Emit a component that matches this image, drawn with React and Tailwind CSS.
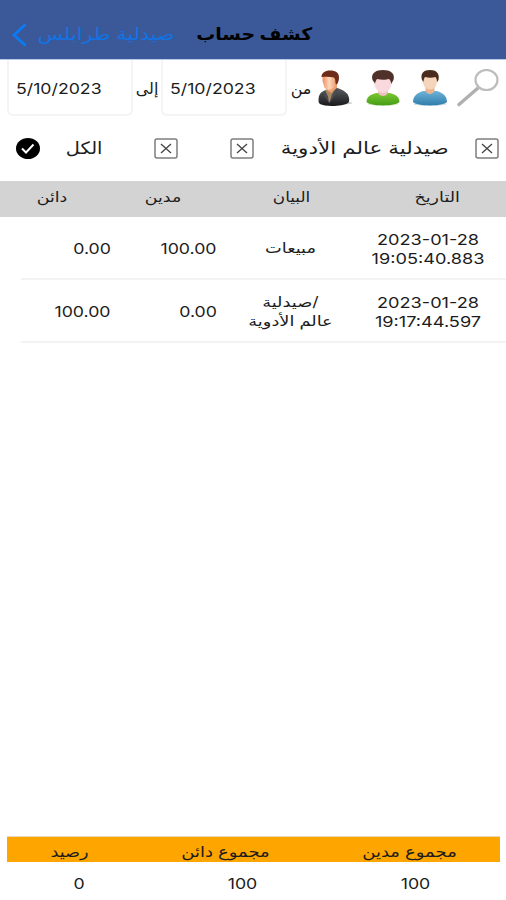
import React from "react";

const rows = [
  {
    date: "2023-01-28",
    time: "19:05:40.883",
    note: ["مبيعات"],
    debit: "100.00",
    credit: "0.00",
  },
  {
    date: "2023-01-28",
    time: "19:17:44.597",
    note: ["/صيدلية", "عالم الأدوية"],
    debit: "0.00",
    credit: "100.00",
  },
];

const SuitMan = () => (
  <svg viewBox="0 0 36 38" className="w-[36px] h-[38px] shrink-0">
    <defs>
      <linearGradient id="suit" x1="0" y1="0" x2="0" y2="1">
        <stop offset="0" stopColor="#5c5f64" />
        <stop offset="1" stopColor="#17181a" />
      </linearGradient>
      <linearGradient id="suitFace" x1="0" y1="0" x2="1" y2="0">
        <stop offset="0" stopColor="#f08f5e" />
        <stop offset="0.450" stopColor="#fbd8bd" />
        <stop offset="1" stopColor="#ea8f5c" />
      </linearGradient>
    </defs>
    <ellipse cx="20" cy="34" rx="15.500" ry="1.800" fill="#d0d0d0" />
    <path d="M1.500 31c0-5 2-8 6-9.500L20 19c7 2 11 5 12 10 .5 3 0 4-1 5-5 3.500-23 4-28 1-1.200-1-1.500-2-1.500-4z" fill="url(#suit)" />
    <path d="M8 21l5-2 6-1-2 8-5 8-2-6z" fill="#a8875f" />
    <path d="M8 21.500l3 6 1 6-5-7z" fill="#4a4b4f" />
    <path d="M19 18.500l3 2-10 14 3-9z" fill="#4a4c50" />
    <path d="M10 14h10v5l-6 5-4-3z" fill="#ee9c70" />
    <path d="M5.500 9c0-4 4-5 8-5 4 0 7 2 7 6s-2 7-4 9c-2 1.500-4 2-6 1.500-3-.5-3.500-3-4-5.500-1-2-1-4-1-6z" fill="url(#suitFace)" />
    <path d="M4.500 8C4.500 4 8 1.500 13 1.500c6 0 9 2.500 9 7 0 3-1 5-2 7l-1.500-1c0-3-.5-5-1.500-6-4-1-8-1-12.500-.5z" fill="#6d2b18" />
  </svg>
);

const GreenUser = () => (
  <svg viewBox="0 0 36 38" className="w-[36px] h-[38px] shrink-0">
    <defs>
      <linearGradient id="green" x1="0" y1="0" x2="0" y2="1">
        <stop offset="0" stopColor="#7cc832" />
        <stop offset="1" stopColor="#459d16" />
      </linearGradient>
    </defs>
    <ellipse cx="18" cy="35" rx="15.500" ry="1.800" fill="#dce8d3" />
    <path d="M1.500 33c0-5 4-8 10-9h13c6 1 10 4 10 9-4 4.500-29 4.500-33 0z" fill="url(#green)" />
    <path d="M13 20h10v4c-2 4-8 4-10 0z" fill="#eebfbd" />
    <path d="M8.500 10c0-4 19-4 19 0 0 7-4 14-9.500 14S8.500 17 8.500 10z" fill="#f9d9de" />
    <path d="M7.500 11C5.500 4 11 1 18 1s12.500 3 10.500 10L26 15c0-3-1-4-2-5-3 1-8 1-12 0-1 1-1.500 3-2 4.500z" fill="#4f3129" />
  </svg>
);

const BlueUser = () => (
  <svg viewBox="0 0 36 38" className="w-[36px] h-[38px] shrink-0">
    <defs>
      <linearGradient id="blue" x1="0" y1="0" x2="0" y2="1">
        <stop offset="0" stopColor="#6fb3da" />
        <stop offset="1" stopColor="#2f7dab" />
      </linearGradient>
    </defs>
    <ellipse cx="18" cy="35" rx="16.500" ry="1.800" fill="#ccdbe4" />
    <path d="M1 33c0-6 4-9 10-11h14c6 2 10 5 10 11-4 4.500-30 4.500-34 0z" fill="url(#blue)" />
    <path d="M13.500 17h9v5c-2 4-7 4-9 0z" fill="#e9b591" />
    <path d="M10.500 9c0-4 15-4 15 0 0 6-2 11.500-7.500 11.500S10.500 15 10.500 9z" fill="#f6d4ba" />
    <path d="M10 11C8 4 12 1 18 1s10 3 8.500 10L25 13c0-2-.5-4-1.500-5-3 1-7 1-10.500 0-1 1-1.500 3-1.500 5z" fill="#4a2c1e" />
  </svg>
);

const XBox = () => (
  <svg viewBox="0 0 24 21" className="w-[24px] h-[21px] shrink-0" fill="none">
    <rect x="1" y="1" width="22" height="19" rx="2" stroke="#7d7d7d" strokeWidth="1.500" />
    <path d="M7 6l10 9M17 6L7 15" stroke="#444" strokeWidth="1.300" />
  </svg>
);

const App = () => {
  return (
    <div className="w-[506px] h-[900px] bg-white text-[#1c1c1c] flex flex-col overflow-hidden whitespace-nowrap font-['Inter','DejaVu_Sans',sans-serif]">
      <div className="h-[60px] shrink-0 bg-[#3b5998] border-b border-[#b9cbea] flex items-center pt-[10px] pl-[11px]">
        <svg viewBox="0 0 16 24" className="w-[16px] h-[24px]" fill="none">
          <path d="M14.500 1.500L3 12l11.500 10.500" stroke="#0b7bf5" strokeWidth="2.800" />
        </svg>
        <div className="w-[158px] flex justify-center">
          <span dir="rtl" className="text-[17px] text-[#1273e6] scale-x-122">
            صيدلية طرابلس
          </span>
        </div>
        <div className="w-[138px] flex justify-center">
          <span dir="rtl" className="text-[17px] font-bold text-black scale-x-111">
            كشف حساب
          </span>
        </div>
      </div>

      <div className="h-[60px] shrink-0 flex items-start pl-[7px]">
        <div className="w-[126px] h-[56px] border-2 border-t-0 border-[#f4f4f4] rounded-b-md flex items-center pl-[7px] pt-[4px]">
          <span className="text-[15px] origin-left scale-x-118">5/10/2023</span>
        </div>
        <div className="w-[28px] h-[56px] flex items-center justify-center">
          <span dir="rtl" className="text-[16px]">إلى</span>
        </div>
        <div className="w-[126px] h-[56px] border-2 border-t-0 border-[#f4f4f4] rounded-b-md flex items-center pl-[7px] pt-[4px]">
          <span className="text-[15px] origin-left scale-x-118">5/10/2023</span>
        </div>
        <div className="w-[28px] h-[56px] flex items-center justify-center">
          <span dir="rtl" className="text-[16px]">من</span>
        </div>
        <div className="flex items-start gap-[11px] pl-[2px] pt-[9px]">
          <SuitMan />
          <div className="flex gap-[11px] pl-px">
            <GreenUser />
            <BlueUser />
          </div>
          <svg viewBox="0 0 42 38" className="w-[42px] h-[38px] -ml-[2px]" fill="none">
            <path d="M2 35.500L21 19" stroke="#b0b0b0" strokeWidth="3.500" strokeLinecap="round" />
            <ellipse cx="29.500" cy="11" rx="11" ry="10" stroke="#bdbdbd" strokeWidth="2.200" />
          </svg>
        </div>
      </div>

      <div className="h-[61px] shrink-0 flex items-center pl-[16px] pb-[5px]">
        <svg viewBox="0 0 24 21" className="w-[24px] h-[21px]" fill="none">
          <ellipse cx="12" cy="10.500" rx="12" ry="10.500" fill="#000" />
          <path d="M6 10.500l4 4 7.500-8" stroke="#fff" strokeWidth="2" />
        </svg>
        <div className="w-[87px] pt-[2px] pl-px flex justify-center">
          <span dir="rtl" className="text-[17px] scale-x-114">الكل</span>
        </div>
        <div className="w-[76px] pl-[27px]">
          <XBox />
        </div>
        <div className="w-[50px] pl-[27px]">
          <XBox />
        </div>
        <div className="w-[222px] pt-[2px] pl-px flex justify-center">
          <span dir="rtl" className="text-[17px] scale-x-126">صيدلية عالم الأدوية</span>
        </div>
        <XBox />
      </div>

      <div className="h-[36px] shrink-0 bg-[#d3d3d3] flex items-center pb-[6px] text-[14px]">
        <div dir="rtl" className="w-[104px] text-center scale-x-124">دائن</div>
        <div dir="rtl" className="w-[118px] text-center scale-x-124">مدين</div>
        <div dir="rtl" className="w-[139px] text-center scale-x-120">البيان</div>
        <div className="w-[145px] pl-[7px] flex justify-center">
          <span dir="rtl" className="scale-x-125">التاريخ</span>
        </div>
      </div>

      {rows.map((row) => (
        <div
          key={row.time}
          className="h-[63px] shrink-0 ml-[21px] border-b-2 border-[#f3f3f3] flex items-center text-[15px] leading-[19px]"
        >
          <div className="w-[90px] pt-[2px] text-right">
            <span className="inline-block origin-right scale-x-118">{row.credit}</span>
          </div>
          <div className="w-[106px] pt-[2px] text-right">
            <span className="inline-block origin-right scale-x-118">{row.debit}</span>
          </div>
          <div dir="rtl" className="w-[147px] text-center text-[14px]">
            {row.note.map((line) => (
              <div key={line} className="scale-x-127">{line}</div>
            ))}
          </div>
          <div className="w-[128px] pt-[2px] text-center">
            <div className="scale-x-121">{row.date}</div>
            <div className="scale-x-121">{row.time}</div>
          </div>
        </div>
      ))}

      <div className="mt-auto ml-[7px] mr-[6px] h-[26px] shrink-0 bg-[#ffa500] border-t border-[#e8d9bd] flex items-end text-[15px] leading-[21px]">
        <div dir="rtl" className="w-[125px] text-center scale-x-118">رصيد</div>
        <div dir="rtl" className="w-[187px] text-center scale-x-120">مجموع دائن</div>
        <div dir="rtl" className="w-[181px] text-center scale-x-120">مجموع مدين</div>
      </div>
      <div className="h-[38px] shrink-0 mx-[7px] flex items-center pt-[7px] text-[15px]">
        <div className="w-[144px] text-center scale-x-118">0</div>
        <div className="w-[183px] text-center">
          <span className="inline-block scale-x-118">100</span>
        </div>
        <div className="w-[163px] text-center">
          <span className="inline-block scale-x-118">100</span>
        </div>
      </div>
    </div>
  );
};

export default App;
